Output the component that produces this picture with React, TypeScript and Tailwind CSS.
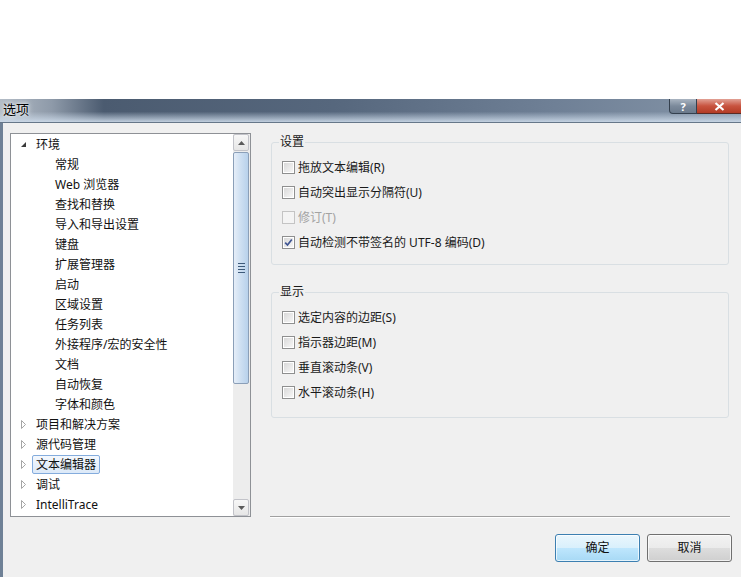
import React from 'react';

type Node = { label: string; level: 0 | 1; expander?: 'open' | 'closed'; selected?: boolean };

const tree: Node[] = [
  { label: '环境', level: 0, expander: 'open' },
  { label: '常规', level: 1 },
  { label: 'Web 浏览器', level: 1 },
  { label: '查找和替换', level: 1 },
  { label: '导入和导出设置', level: 1 },
  { label: '键盘', level: 1 },
  { label: '扩展管理器', level: 1 },
  { label: '启动', level: 1 },
  { label: '区域设置', level: 1 },
  { label: '任务列表', level: 1 },
  { label: '外接程序/宏的安全性', level: 1 },
  { label: '文档', level: 1 },
  { label: '自动恢复', level: 1 },
  { label: '字体和颜色', level: 1 },
  { label: '项目和解决方案', level: 0, expander: 'closed' },
  { label: '源代码管理', level: 0, expander: 'closed' },
  { label: '文本编辑器', level: 0, expander: 'closed', selected: true },
  { label: '调试', level: 0, expander: 'closed' },
  { label: 'IntelliTrace', level: 0, expander: 'closed' },
];

const Expander = ({ kind }: { kind: 'open' | 'closed' }) =>
  kind === 'open' ? (
    <svg width="9" height="9" viewBox="0 0 9 9">
      <polygon points="7,2 7,7 2,7" fill="#3a3a3a" />
    </svg>
  ) : (
    <svg width="9" height="9" viewBox="0 0 9 9">
      <polygon points="2.5,0.5 6.5,4.5 2.5,8.5" fill="#fff" stroke="#a5a5a5" strokeWidth="1" />
    </svg>
  );

const TreeRow = ({ node }: { node: Node }) => (
  <div className="h-[20px] flex items-center">
    {node.level === 0 ? (
      <>
        <div className="w-[9px] ml-[8px] mr-[8px] flex items-center">
          {node.expander && <Expander kind={node.expander} />}
        </div>
        <span
          className={
            node.selected
              ? 'ml-[-4px] px-[3px] h-[19px] leading-[17px] border border-[#84acdd] rounded-[2px] bg-[linear-gradient(to_bottom,#f4f8fd,#dce9f8)]'
              : 'leading-[17px]'
          }
        >
          {node.label}
        </span>
      </>
    ) : (
      <span className="ml-[44px] leading-[17px]">{node.label}</span>
    )}
  </div>
);

const ScrollButton = ({ dir }: { dir: 'up' | 'down' }) => (
  <div className="h-[17px] border border-[#c2c3c9] rounded-[2px] bg-[linear-gradient(to_bottom,#f7f7f7,#e6e6e6)] flex items-center justify-center">
    <svg width="7" height="4" viewBox="0 0 7 4">
      {dir === 'up' ? (
        <polygon points="0,4 3.5,0 7,4" fill="#5a5a5a" />
      ) : (
        <polygon points="0,0 3.5,4 7,0" fill="#5a5a5a" />
      )}
    </svg>
  </div>
);

const Scrollbar = () => (
  <div className="w-[17px] flex flex-col bg-[#ededed] pr-[1px]">
    <ScrollButton dir="up" />
    <div className="mt-[1px] h-[232px] border border-[#8b9fb8] rounded-[2px] bg-[linear-gradient(to_right,#e6eef8,#cfe0f2_45%,#b8d1eb)] flex flex-col items-center justify-center gap-[2px]">
      <div className="w-[7px] h-px bg-[#3d5a7a]" />
      <div className="w-[7px] h-px bg-[#3d5a7a]" />
      <div className="w-[7px] h-px bg-[#3d5a7a]" />
      <div className="w-[7px] h-px bg-[#3d5a7a]" />
    </div>
    <div className="flex-1" />
    <ScrollButton dir="down" />
  </div>
);

const Checkbox = ({ checked, disabled }: { checked?: boolean; disabled?: boolean }) => (
  <div
    className={
      disabled
        ? 'w-[13px] h-[13px] border border-[#c4c4c4] bg-[#f4f4f4]'
        : 'w-[13px] h-[13px] border border-[#8e8f8f] p-[1px] bg-white'
    }
  >
    {!disabled && (
      <div className="w-full h-full bg-[linear-gradient(135deg,#d9d9d9,#f6f6f6)] flex items-center justify-center">
        {checked && (
          <svg width="9" height="9" viewBox="0 0 9 9">
            <path d="M1.2 4.6 L3.5 7 L7.8 1.5" fill="none" stroke="#3f5593" strokeWidth="1.7" />
          </svg>
        )}
      </div>
    )}
  </div>
);

const Option = ({ label, checked, disabled }: { label: string; checked?: boolean; disabled?: boolean }) => (
  <div className="h-[25px] flex items-center pl-[10px] gap-[3px]">
    <Checkbox checked={checked} disabled={disabled} />
    <span className={disabled ? 'text-[#a3a3a3]' : 'text-[#1a1a1a]'}>{label}</span>
  </div>
);

const Group = ({ title, className, children }: { title: string; className: string; children: React.ReactNode }) => (
  <fieldset className={`ml-[1px] mr-[2px] border border-[#d9dfe3] rounded-[3px] pt-[5px] ${className}`}>
    <legend className="ml-[7px] px-[1px] leading-[16px] text-[#1a1a1a]">{title}</legend>
    {children}
  </fieldset>
);

export default function App() {
  return (
    <div
      className="w-[741px] h-[577px] bg-white flex flex-col overflow-hidden text-[12px] text-black"
      style={{ fontFamily: '"Noto Sans", "Noto Sans CJK SC", sans-serif' }}
    >
      <div className="h-[99px] shrink-0" />

      {/* title bar */}
      <div className="h-[24px] shrink-0 flex items-start border-b border-[#667789] bg-[linear-gradient(to_bottom,rgba(255,255,255,0)_55%,rgba(205,219,234,0.9)_100%),linear-gradient(to_right,#b3bcc6_0%,#8e9aa9_7%,#4b5b70_14%,#56677d_45%,#6f8096_75%,#8595a8_100%)]">
        <span className="ml-[3px] mt-[1px] text-[13px] leading-[18px] text-black [text-shadow:0_0_6px_#fff,0_0_3px_#fff]">选项</span>
        <div className="ml-auto flex">
          <div className="w-[28px] h-[15px] border border-[#34404e] border-t-0 rounded-bl-[4px] bg-[linear-gradient(to_bottom,#a9b4c1,#7c8a9b_50%,#6a798b)] flex items-center justify-center text-white font-bold text-[11px] leading-none">
            ?
          </div>
          <div className="w-[44px] h-[15px] border-b border-[#5a2a24] bg-[linear-gradient(to_bottom,#e2a195,#c8533f_50%,#b33b25)] flex items-center justify-center">
            <svg width="11" height="9" viewBox="0 0 11 9">
              <path d="M1.5 1 L9.5 8 M9.5 1 L1.5 8" stroke="#fff" strokeWidth="2.2" />
            </svg>
          </div>
        </div>
      </div>

      {/* window body */}
      <div className="flex-1 flex border-l-[3px] border-[#6f8196] bg-[#f0f0f0]">
        <div className="ml-[7px] mt-[10px] w-[241px] h-[384px] border border-[#8e9196] bg-white flex">
          <div className="flex-1 flex flex-col text-[#111]">
            {tree.map((n) => (
              <TreeRow key={n.label} node={n} />
            ))}
          </div>
          <Scrollbar />
        </div>

        <div className="ml-[19px] w-[461px] flex flex-col pt-[11px] pb-[15px]">
          <Group title="设置" className="pb-[9px]">
            <Option label="拖放文本编辑(R)" />
            <Option label="自动突出显示分隔符(U)" />
            <Option label="修订(T)" disabled />
            <Option label="自动检测不带签名的 UTF-8 编码(D)" checked />
          </Group>
          <Group title="显示" className="mt-[19px] pb-[12px]">
            <Option label="选定内容的边距(S)" />
            <Option label="指示器边距(M)" />
            <Option label="垂直滚动条(V)" />
            <Option label="水平滚动条(H)" />
          </Group>

          <div className="mt-auto w-[460px] h-px bg-[#a0a0a0] shadow-[0_1px_0_#fff]" />
          <div className="mt-[17px] flex justify-end gap-[7px] -mr-[1px]">
            <button className="w-[85px] h-[28px] border border-[#3c7fb1] rounded-[3px] bg-[linear-gradient(to_bottom,#eaf6fd,#d9f0fc_50%,#bee6fd_51%,#a7d9f5)] shadow-[inset_0_0_0_1px_rgba(255,255,255,0.7)] text-[#111]">
              确定
            </button>
            <button className="w-[85px] h-[28px] border border-[#707070] rounded-[3px] bg-[linear-gradient(to_bottom,#f2f2f2,#ebebeb_50%,#dddddd_51%,#cfcfcf)] shadow-[inset_0_0_0_1px_rgba(255,255,255,0.7)] text-[#111]">
              取消
            </button>
          </div>
        </div>
      </div>
    </div>
  );
}
